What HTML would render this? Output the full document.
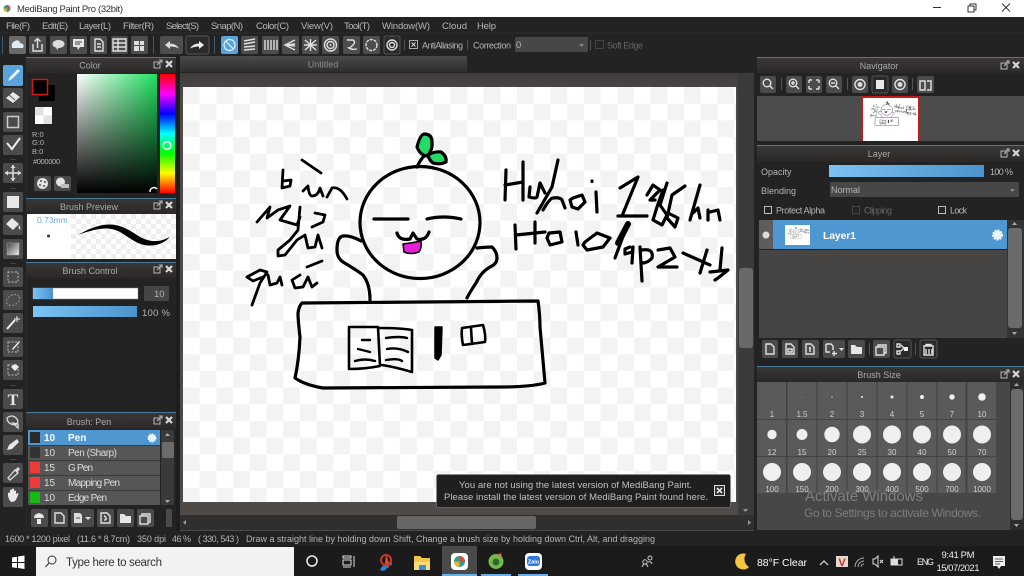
<!DOCTYPE html>
<html><head><meta charset="utf-8"><title>MediBang Paint Pro</title>
<style>
html,body{margin:0;padding:0;background:#222;width:1024px;height:576px;overflow:hidden}
svg{display:block;font-family:"Liberation Sans",sans-serif;filter:blur(.35px)}
text{fill:#b5b5b5;font-size:9.5px}
.ti{fill:#a9a9a9;font-size:9px;text-anchor:middle}
.m{fill:#b8b8b8;font-size:9.5px}
.c{text-anchor:middle;fill:#d0d0d0;font-size:8px}
.art path,.art ellipse{fill:none;stroke:#000;stroke-width:3.2;stroke-linecap:round;stroke-linejoin:round}
.ic{fill:none;stroke:#e0e0e0;stroke-width:1.4}
.tb{fill:#fff;font-size:11px}
</style></head><body>
<svg width="1024" height="576" viewBox="0 0 1024 576" xmlns="http://www.w3.org/2000/svg">
<defs>
<pattern id="ck" x="183" y="87" width="33.4" height="33.4" patternUnits="userSpaceOnUse"><rect width="33.4" height="33.4" fill="#fff"/><rect width="16.7" height="16.7" fill="#f3f3f3"/><rect x="16.7" y="16.7" width="16.7" height="16.7" fill="#f3f3f3"/></pattern>
<pattern id="ck2" x="71" y="214" width="10" height="10" patternUnits="userSpaceOnUse"><rect width="10" height="10" fill="#fff"/><rect width="5" height="5" fill="#eeeeee"/><rect x="5" y="5" width="5" height="5" fill="#eeeeee"/></pattern>
<pattern id="ck3" x="35" y="107" width="17" height="17" patternUnits="userSpaceOnUse"><rect width="17" height="17" fill="#fff"/><rect width="8.5" height="8.5" fill="#e2e2e2"/><rect x="8.5" y="8.5" width="8.5" height="8.5" fill="#e2e2e2"/></pattern>
<linearGradient id="tg" x1="0" y1="0" x2="0" y2="1"><stop offset="0" stop-color="#3a3837"/><stop offset="1" stop-color="#2a2928"/></linearGradient>
<linearGradient id="tab" x1="0" y1="0" x2="0" y2="1"><stop offset="0" stop-color="#4a4a4a"/><stop offset="1" stop-color="#2e2e2e"/></linearGradient>
<linearGradient id="cv" x1="0" y1="0" x2="0" y2="1"><stop offset="0" stop-color="#3e3d3c"/><stop offset=".05" stop-color="#4d4a47"/><stop offset="1" stop-color="#4d4a47"/></linearGradient>
<linearGradient id="bl" x1="0" y1="0" x2="1" y2="0"><stop offset="0" stop-color="#7cc2f3"/><stop offset="1" stop-color="#4b93cc"/></linearGradient>
<linearGradient id="hue" x1="0" y1="0" x2="0" y2="1"><stop offset="0" stop-color="#f00"/><stop offset=".167" stop-color="#f0f"/><stop offset=".333" stop-color="#00f"/><stop offset=".5" stop-color="#0ff"/><stop offset=".667" stop-color="#0f0"/><stop offset=".833" stop-color="#ff0"/><stop offset="1" stop-color="#f00"/></linearGradient>
<linearGradient id="sv1" x1="0" y1="0" x2="1" y2="0"><stop offset="0" stop-color="#fff"/><stop offset="1" stop-color="#1fe060"/></linearGradient>
<linearGradient id="sv2" x1="0" y1="0" x2="0" y2="1"><stop offset="0" stop-color="#000" stop-opacity="0"/><stop offset="1" stop-color="#000"/></linearGradient>
<linearGradient id="gr" x1="0" y1="0" x2="1" y2="1"><stop offset="0" stop-color="#444"/><stop offset="1" stop-color="#eee"/></linearGradient>
<g id="hd"><rect x="0" y="-4" width="6" height="6" fill="none" stroke="#b5b5b5"/><path d="M3 -1L8 -6M5 -6h3v3" stroke="#b5b5b5" fill="none"/><path d="M12 -5L18 1M18 -5L12 1" stroke="#d8d8d8" stroke-width="2.2"/></g>
<g id="art" class="art">
<ellipse cx="420" cy="222.5" rx="60" ry="56"/>
<path d="M417 167Q420 160 425 155"/>
<path d="M417 147Q420 135 424 134Q432 134 432 142Q433 150 427 156Q420 155 417 147Z" style="fill:#22dc66"/>
<path d="M428 155Q435 151 441 152Q447 156 446 162Q440 165 433 163Q429 160 428 155Z" style="fill:#22dc66"/>
<path d="M374 219H408M427 219Q443 215 461 219"/>
<path d="M397 233Q399 241 410 239L413 233L417 239Q426 241 429 232"/>
<path d="M403 244Q412 243 421 241Q422 248 419 252Q411 255 404 252Z" style="fill:#e81ed8;stroke:#000;stroke-width:1.5"/>
<path d="M361 241Q350 235 343 236Q337 237 337 250Q337 258 343 262Q358 271 363 275Q370 284 370 300"/>
<path d="M477 248Q487 247 492 247Q497 252 497 258Q497 264 490 267Q481 272 476 283Q470 292 467 298"/>
<path d="M302 303L538 301Q540 315 540 327L545 383Q530 387 500 387L323 388Q305 385 295 378Q299 360 300 337Q298 320 298 313Q299 306 302 303Z"/>
<path d="M349 327L378 327L380 366Q365 369 349 369Q349 345 349 327Z" style="stroke-width:2.6"/>
<path d="M380 328Q400 328 412 330V372Q395 367 382 365" style="stroke-width:2.6"/>
<path d="M362 340H370M358 349L370 352M355 361Q365 358 375 361M386 338Q400 336 407 338M387 349Q398 347 408 352M386 360Q398 358 402 361" style="stroke-width:2.4"/>
<path d="M435 327H442L441 355L438 360L435 358Z" style="fill:#000;stroke-width:1.5"/>
<path d="M462 328L483 325Q486 335 485 342L463 345Q461 335 462 328ZM471 328L472 344" style="stroke-width:2.6"/>
<path d="M283 170L282 188L290 186L291 180L283 181M302 160L321 173M303 191L308 186Q309 196 312 196Q318 196 320 188L323 196M327 197L332 188Q340 186 347 199" style="stroke-width:2.8"/>
<path d="M257 222L270 207L267 218L278 210L290 206L280 220L297 225L300 217M300 207L298 230L290 240L278 250L278 256L285 255L297 240L305 235L308 248L315 247L318 235L322 248M315 213L325 215L323 222L312 227" style="stroke-width:2.8"/>
<path d="M247 277L260 270L267 272L260 283L252 305M247 277L253 281L263 277M268 275L270 285L277 283L280 277L282 285M300 275L292 280L295 288L303 287L308 277L312 287L317 283M307 267L322 261" style="stroke-width:2.8"/>
<path d="M506 170L505 200M505 185L523 182M523 162V200M530 187L529 197Q536 199 537 197L540 183L545 193M558 160L552 187L537 213M543 210Q550 198 553 198Q560 197 562 200L565 208M573 198L582 195L585 202L578 209L572 207L570 200ZM596 192L597 212M592 181V181.500M620 188L638 177L622 216M618 216H647M647 195L653 185L660 190L650 200L655 200M663 190L657 207L653 220L662 225L667 215L660 205L667 183M685 186L672 195L667 218L675 227L678 218L668 213M700 185L690 220M693 213L698 208L700 218M708 210V220M710 212L718 210L720 220"/>
<path d="M515 225L516 249M516 235L545 232M535 222V243M549 233L560 232L562 242L550 245L547 238ZM576 232L578 245M585 242L597 233L610 238L603 247L587 250L583 245ZM628 223L615 258"/>
<path d="M628 224L618 243" style="stroke-width:6"/>
<path d="M630 247L625 249L625 254L632 252L633 247L632 263M640 247L642 281M642 250Q654 248 652 258Q648 263 642 263M658 250L670 248L675 257L658 267L677 267M683 253L710 265M707 250L700 273M710 272L728 270L718 278L715 280M722 248L720 270"/>
</g>
</defs>

<!-- title bar -->
<rect width="1024" height="17" fill="#fff"/>
<circle cx="7" cy="8.5" r="3.5" fill="#2b9f8a"/><path d="M7 5a3.5 3.5 0 0 1 3.5 3.5H7z" fill="#e04c3c"/><path d="M3.5 8.5A3.5 3.5 0 0 0 7 12V8.5z" fill="#e0b030"/>
<text x="17" y="12" style="fill:#333;font-size:9.5px" textLength="106">MediBang Paint Pro (32bit)</text>
<path d="M933 7.5H941" stroke="#333"/><path d="M968 6h6v6h-6zM970 6V4h6v6h-2" fill="none" stroke="#333"/><path d="M1002 3.5l8 8M1010 3.5l-8 8" stroke="#333"/>

<!-- base -->
<rect y="17" width="1024" height="514" fill="#232323"/>
<text class="m" x="6" y="29" textLength="24">File(F)</text><text class="m" x="42" y="29" textLength="26">Edit(E)</text><text class="m" x="79" y="29" textLength="32">Layer(L)</text><text class="m" x="123" y="29" textLength="31">Filter(R)</text><text class="m" x="166" y="29" textLength="33">Select(S)</text><text class="m" x="211" y="29" textLength="32">Snap(N)</text><text class="m" x="256" y="29" textLength="33">Color(C)</text><text class="m" x="301" y="29" textLength="32">View(V)</text><text class="m" x="344" y="29" textLength="26">Tool(T)</text><text class="m" x="382" y="29" textLength="48">Window(W)</text><text class="m" x="442" y="29" textLength="25">Cloud</text><text class="m" x="477" y="29" textLength="19">Help</text>
<path d="M0 33H1024" stroke="#2c2c2c"/>

<!-- toolbar -->
<g fill="#4d4d4d">
<rect x="9" y="36" width="17" height="18" rx="2" fill="#6a6a6a"/><rect x="29" y="36" width="17" height="18" rx="2"/><rect x="50" y="36" width="17" height="18" rx="2"/><rect x="70" y="36" width="17" height="18" rx="2"/><rect x="90" y="36" width="17" height="18" rx="2"/><rect x="111" y="36" width="17" height="18" rx="2"/><rect x="131" y="36" width="17" height="18" rx="2"/>
<rect x="160" y="36" width="23" height="18" rx="2"/><rect x="186" y="36" width="23" height="18" rx="2" fill="#2a2a2a" stroke="#555"/>
<rect x="221" y="36" width="17" height="18" rx="2" fill="#5aa4dc"/>
<rect x="241" y="36" width="17" height="18" rx="2"/><rect x="262" y="36" width="17" height="18" rx="2"/><rect x="282" y="36" width="17" height="18" rx="2"/><rect x="302" y="36" width="17" height="18" rx="2"/><rect x="322" y="36" width="17" height="18" rx="2"/><rect x="343" y="36" width="17" height="18" rx="2"/><rect x="363" y="36" width="17" height="18" rx="2"/><rect x="384" y="36" width="16" height="18" rx="2" fill="#2a2a2a" stroke="#555"/>
</g>
<path d="M2.5 36V54M153.5 36V54M214.5 36V54" stroke="#3d5c75"/>
<path d="M12 48h11q2-4-3-5q-1-4-5-2q-4 1-3 7z" fill="#dcecf8"/>
<path d="M33 44v7h9v-7M37.500 48V39M34.500 41.500l3-3l3 3" class="ic"/>
<ellipse cx="58.500" cy="44" rx="6" ry="4" fill="#ddd"/><path d="M56 47l1 3l2-3z" fill="#ddd"/>
<path d="M73 39h11v8h-4l-2 3l-1-3h-4z" fill="#e6e6e6"/><path d="M75 42h7M75 44h5" stroke="#444"/>
<path d="M95 39h5l3 3v9h-8zM97 44h4M97 47h4" class="ic"/>
<path d="M113 39h13v12h-13zM113 43h13M113 47h13M118 39v12" class="ic" stroke-width="1"/>
<path d="M134 41h5v4h-5zM140 41h4v4h-4zM134 46h5v5h-5zM140 46h4v5h-4z" fill="#ddd"/>
<path d="M165 45l5-4v2.500q6 0 9 5q-4-2-9-2v2.500z" fill="#ddd"/><path d="M204 45l-5-4v2.500q-6 0-9 5q4-2 9-2v2.500z" fill="#eee"/>
<circle cx="229.500" cy="45" r="5.500" fill="none" stroke="#dff0ff" stroke-width="1.200"/><path d="M225.500 41l8 8" stroke="#dff0ff" stroke-width="1.200"/>
<path d="M244 41l11-2M244 44l11-2M244 47l11-1M244 50l11-1" class="ic" stroke-width="1.300"/>
<path d="M265 40v10M268 40v10M271 40v10M274 40v10M277 40v10" class="ic" stroke-width="1.300"/>
<path d="M295 40l-10 5l10 5M295 44l-8 1l8 1" class="ic" stroke-width="1.300"/>
<path d="M305 40l11 10M316 40l-11 10M310.500 39v12M304 45h13" class="ic" stroke-width="1"/>
<circle cx="330.500" cy="45" r="6" class="ic" stroke-width="1"/><circle cx="330.500" cy="45" r="3.500" class="ic" stroke-width="1"/><circle cx="330.500" cy="45" r="1" fill="#ddd"/>
<path d="M347 40h6q3 2 0 5t-4 3q3 2 8 1" class="ic"/>
<circle cx="371.500" cy="45" r="5.500" class="ic" stroke-width="1.800" stroke-dasharray="3 1"/>
<circle cx="392" cy="45" r="5" class="ic" stroke-width="1.200"/><circle cx="392" cy="45" r="2.500" class="ic" stroke-width="1"/>
<path d="M404.500 40V50M467.500 40V50M590.500 40V50" stroke="#555"/>
<rect x="409.500" y="40.500" width="8" height="8" fill="none" stroke="#aaa"/><path d="M411.500 42.500l4 4M415.500 42.500l-4 4" stroke="#ddd"/>
<text x="422" y="48.500" textLength="41" style="font-size:9px">AntiAliasing</text>
<text x="473" y="48.500" textLength="38" style="font-size:9px">Correction</text>
<rect x="515" y="37" width="73" height="15" rx="1" fill="#474747"/><text x="516" y="48">0</text><path d="M579 44h5l-2.500 3z" fill="#888"/>
<rect x="595.500" y="40.500" width="8" height="8" fill="none" stroke="#444"/><text x="607" y="48.500" textLength="36" style="font-size:9px;fill:#666">Soft Edge</text>

<!-- left tools -->
<g fill="#4b4b4b">
<rect x="3" y="65" width="20" height="21" rx="2" fill="#5aa4dc"/>
<rect x="3" y="88" width="20" height="20" rx="2"/><rect x="3" y="112" width="20" height="20" rx="2"/><rect x="3" y="135" width="20" height="20" rx="2"/>
<rect x="3" y="163" width="20" height="20" rx="2"/><rect x="3" y="192" width="20" height="20" rx="2"/><rect x="3" y="215" width="20" height="20" rx="2"/><rect x="3" y="239" width="20" height="20" rx="2"/>
<rect x="3" y="267" width="20" height="20" rx="2"/><rect x="3" y="290" width="20" height="20" rx="2"/><rect x="3" y="313" width="20" height="20" rx="2"/><rect x="3" y="337" width="20" height="20" rx="2"/><rect x="3" y="360" width="20" height="20" rx="2"/>
<rect x="3" y="389" width="20" height="20" rx="2"/><rect x="3" y="412" width="20" height="20" rx="2"/><rect x="3" y="435" width="20" height="20" rx="2"/>
<rect x="3" y="463" width="20" height="20" rx="2"/><rect x="3" y="487" width="20" height="20" rx="2"/>
</g>
<path d="M8 81l2-4l8-8l2 2l-8 8z" fill="#eef6ff"/>
<path d="M6 98l7-6l7 5l-7 6z" fill="#e8e8e8"/><path d="M9 95l6 5" stroke="#555"/>
<rect x="7.500" y="116.500" width="11" height="11" fill="none" stroke="#ccc" stroke-width="1.500"/>
<path d="M7 143l5 6l8-11" fill="none" stroke="#eee" stroke-width="2"/>
<path d="M13 165v16M5 173h16" stroke="#ddd" stroke-width="1.500"/><path d="M10.500 168l2.500-3l2.500 3zM10.500 178l2.500 3l2.500-3zM8 170.500l-3 2.500l3 2.500zM18 170.500l3 2.500l-3 2.500z" fill="#ddd"/>
<rect x="7" y="196" width="12" height="12" fill="#e8e8e8"/>
<path d="M6 224l6-6l7 6l-6 6zM19 225q2 3 1 5q-2-2-1-5z" fill="#e8e8e8"/>
<rect x="7" y="243" width="12" height="12" fill="url(#gr)" stroke="#aaa" stroke-width=".5"/>
<rect x="8" y="272" width="10" height="10" fill="none" stroke="#bbb" stroke-dasharray="2 1.500"/>
<ellipse cx="13" cy="300" rx="7" ry="5" fill="none" stroke="#999" stroke-dasharray="2 1.500" transform="rotate(-25 13 300)"/>
<path d="M7 329l8-9" stroke="#eee" stroke-width="2"/><path d="M17 316v6M14 319h6" stroke="#eee"/>
<rect x="8" y="342" width="10" height="10" fill="none" stroke="#bbb" stroke-dasharray="2 1.500"/><path d="M12 349l7-8l1 1l-7 8z" fill="#eee"/>
<rect x="8" y="365" width="10" height="10" fill="none" stroke="#bbb" stroke-dasharray="2 1.500"/><path d="M11 367l4-3l4 3l-4 4z" fill="#eee"/>
<text x="13" y="405" style="font:bold 16px 'Liberation Serif',serif;fill:#e8e8e8;text-anchor:middle">T</text>
<path d="M7 418q5-4 9 0t-1 7l-4-1q-4-2-4-6zM13 423l5 5v-4z" fill="none" stroke="#ddd" stroke-width="1.300"/>
<path d="M7 450l2-5l8-6l2 3l-7 7z" fill="#e8e8e8"/>
<path d="M8 478l7-8l3 3l-8 7z" fill="none" stroke="#ddd" stroke-width="1.300"/><path d="M15 470l3-3l2 2l-3 4z" fill="#ddd"/>
<path d="M8 497v-4q1-1 2 0v-3q1-1 2 0v-1q1-1 2 0v2q1-1 2 0v3l2-1q1 1 0 2l-2 5q-2 2-5 2q-2-2-3-6z" fill="#e8e8e8"/>
<path d="M10 159.500h6M10 188.500h6M10 263.500h6M10 385.500h6M10 459.500h6" stroke="#444"/>
<rect x="26" y="56" width="1" height="475" fill="#2a2a2a"/>

<!-- color panel -->
<rect x="26" y="58" width="150" height="15" fill="url(#tg)"/><rect x="26" y="57" width="150" height="1" fill="#4a7896"/>
<text class="ti" x="90" y="68.500">Color</text><use href="#hd" x="154" y="66"/>
<rect x="39" y="85" width="16" height="16" fill="#000"/>
<rect x="32.500" y="79.500" width="15" height="15" fill="#000" stroke="#d01818" stroke-width="1.500"/>
<rect x="35" y="107" width="17" height="17" fill="url(#ck3)"/>
<text x="32" y="137" style="font-size:7.500px">R:0</text><text x="32" y="145" style="font-size:7.500px">G:0</text><text x="32" y="154" style="font-size:7.500px">B:0</text><text x="33" y="164" style="font-size:7.500px" textLength="27">#000000</text>
<rect x="34" y="176" width="17" height="15" rx="2" fill="#4a4a4a"/><rect x="54" y="176" width="17" height="15" rx="2" fill="#4a4a4a"/>
<circle cx="42.500" cy="183.500" r="5.500" fill="#e2e2e2"/><circle cx="41" cy="181" r="1" fill="#555"/><circle cx="45" cy="182" r="1" fill="#555"/><circle cx="40" cy="185" r="1" fill="#555"/><circle cx="44" cy="186" r="1" fill="#555"/>
<circle cx="60.500" cy="182" r="4.500" fill="#e2e2e2"/><rect x="61" y="184" width="8" height="4" fill="#bbb"/>
<rect x="77" y="74" width="80" height="119" fill="url(#sv1)"/><rect x="77" y="74" width="80" height="119" fill="url(#sv2)"/>
<path d="M150 192a4 4 0 0 1 7-3" fill="none" stroke="#eee" stroke-width="1.500"/>
<rect x="160" y="74" width="15" height="119" fill="url(#hue)"/>
<circle cx="167" cy="145.500" r="3.800" fill="none" stroke="#eef" stroke-width="1.500"/>

<!-- brush preview -->
<rect x="26" y="199" width="150" height="15" fill="url(#tg)"/><rect x="26" y="198" width="150" height="1" fill="#4a7896"/>
<text class="ti" x="89" y="210">Brush Preview</text><use href="#hd" x="154" y="207"/>
<rect x="27" y="214" width="44" height="45" fill="#fff"/><rect x="71" y="214" width="105" height="45" fill="url(#ck2)"/>
<text x="37" y="223" style="fill:#6fa9d6;font-size:8.500px">0.73mm</text><circle cx="48.500" cy="236" r="1.500" fill="#333"/>
<path d="M78 235C88 229 98 225 108 224.500C122 224 132 232 141 237.500C150 242 160 243 170 236.500C165 243 157 246 148 245.500C138 245 130 238 120 232C110 227 100 227 78 235Z" fill="#000"/>

<!-- brush control -->
<rect x="26" y="263" width="150" height="15" fill="url(#tg)"/><rect x="26" y="262" width="150" height="1" fill="#4a7896"/>
<text class="ti" x="90" y="274">Brush Control</text><use href="#hd" x="154" y="271"/>
<rect x="33" y="288" width="105" height="11" fill="#fff" stroke="#888" stroke-width=".5"/><rect x="33" y="288" width="20" height="11" fill="url(#bl)"/>
<rect x="144" y="286" width="25" height="15" rx="1" fill="#454545"/><text x="154" y="297">10</text>
<rect x="33" y="306" width="104" height="11" fill="url(#bl)"/><text x="142" y="316" textLength="28">100 %</text>

<!-- brush list -->
<rect x="26" y="413" width="150" height="16" fill="url(#tg)"/><rect x="26" y="412" width="150" height="1" fill="#4a7896"/>
<text class="ti" x="89" y="425">Brush: Pen</text><use href="#hd" x="154" y="422"/>
<rect x="28" y="430" width="132" height="75" fill="#565656"/>
<rect x="28" y="430" width="132" height="15" fill="#4f97d0"/>
<path d="M28 445.500H160M28 460.500H160M28 475.500H160M28 490.500H160" stroke="#3c3c3c"/>
<rect x="30" y="432" width="10" height="11" fill="#2b2b2b"/><rect x="30" y="447" width="10" height="11" fill="#333"/><rect x="30" y="462" width="10" height="11" fill="#ef3a3a"/><rect x="30" y="477" width="10" height="11" fill="#ef3a3a"/><rect x="30" y="492" width="10" height="11" fill="#15b815"/>
<text x="44" y="441" style="fill:#fff;font-size:10px;font-weight:bold">10</text><text x="68" y="441" style="fill:#fff;font-size:10px;font-weight:bold">Pen</text>
<text x="44" y="456" style="fill:#ddd;font-size:10px">10</text><text x="68" y="456" style="fill:#ddd;font-size:10px" textLength="49">Pen (Sharp)</text>
<text x="44" y="471" style="fill:#ddd;font-size:10px">15</text><text x="68" y="471" style="fill:#ddd;font-size:10px" textLength="25">G Pen</text>
<text x="44" y="486" style="fill:#ddd;font-size:10px">15</text><text x="68" y="486" style="fill:#ddd;font-size:10px" textLength="52">Mapping Pen</text>
<text x="44" y="501" style="fill:#ddd;font-size:10px">10</text><text x="68" y="501" style="fill:#ddd;font-size:10px" textLength="39">Edge Pen</text>
<circle cx="152" cy="438" r="3.800" fill="#e8f3fb" stroke="#e8f3fb" stroke-dasharray="1.500 1" stroke-width="1.500"/>
<rect x="161" y="430" width="13" height="75" fill="#3a3a3a"/><rect x="162" y="442" width="12" height="16" rx="2" fill="#6b6b6b"/><path d="M165 436l2.500-3l2.500 3zM165 500l2.500 3l2.500-3z" fill="#aaa"/>
<g fill="#4b4b4b"><rect x="31" y="509" width="17" height="18" rx="2"/><rect x="51" y="509" width="17" height="18" rx="2"/><rect x="71" y="509" width="23" height="18" rx="2"/><rect x="97" y="509" width="17" height="18" rx="2"/><rect x="117" y="509" width="17" height="18" rx="2"/><rect x="137" y="509" width="17" height="18" rx="2"/><rect x="166" y="509" width="6" height="18" rx="1"/></g>
<path d="M34 518q0-4 5-5q5 1 5 5zM37 519h4v5h-4z" fill="#e8e8e8"/>
<path d="M55 513h6l3 3v7h-9z" class="ic" stroke-width="1"/>
<path d="M74 513h6l2 2v8h-8z" fill="#ddd"/><path d="M76 518h4" stroke="#555"/><path d="M85 517h6l-3 3z" fill="#ddd"/>
<path d="M101 513h6l3 3v7h-9zM104 520q3 0 2-2t-2-2" class="ic" stroke-width="1"/>
<path d="M120 514h4l2 2h5v7h-11z" fill="#e6e6e6"/>
<path d="M140 516h8v8h-8zM142 516v-2h8v8h-2" class="ic" stroke-width="1"/>

<!-- canvas area -->
<rect x="176" y="56" width="4" height="475" fill="#1e1e1e"/>
<rect x="180" y="56" width="287" height="16" rx="1" fill="url(#tab)"/>
<text class="ti" x="323" y="67.500" style="fill:#8f8f8f">Untitled</text>
<rect x="180" y="73" width="574" height="458" fill="url(#cv)"/>
<rect x="183" y="87" width="553" height="415" fill="url(#ck)"/>
<use href="#art"/>

<rect x="738" y="74" width="16" height="441" fill="#3a3a3a"/><rect x="739" y="268" width="14" height="80" rx="3" fill="#696969"/>
<path d="M743 509h5l-2.500 3z" fill="#999"/>
<rect x="180" y="515" width="574" height="15" fill="#2f2f2f"/><rect x="397" y="516" width="139" height="13" rx="2" fill="#666"/><path d="M186 520v5l-3-2.500zM748 520v5l3-2.500z" fill="#999"/>

<!-- notification -->
<rect x="436.500" y="474.500" width="294" height="33" rx="2" fill="#1f1f1f" stroke="#8a8a8a" stroke-width=".6"/>
<text x="459" y="488" textLength="233" style="fill:#c0c0c0;font-size:9.500px">You are not using the latest version of MediBang Paint.</text>
<text x="444" y="500" textLength="264" style="fill:#c0c0c0;font-size:9.500px">Please install the latest version of MediBang Paint found here.</text>
<rect x="714.500" y="485.500" width="10" height="10" fill="#333" stroke="#ddd"/><path d="M717 488l5 5M722 488l-5 5" stroke="#fff" stroke-width="1.400"/>

<!-- navigator -->
<rect x="757" y="58" width="267" height="15" fill="url(#tg)"/><rect x="757" y="57" width="267" height="1" fill="#4a7896"/>
<text class="ti" x="879" y="69">Navigator</text><use href="#hd" x="1001" y="67"/>
<g fill="#4b4b4b"><rect x="760" y="76" width="16" height="17" rx="2"/><rect x="786" y="76" width="16" height="17" rx="2"/><rect x="806" y="76" width="16" height="17" rx="2"/><rect x="826" y="76" width="16" height="17" rx="2"/><rect x="852" y="76" width="16" height="17" rx="2"/><rect x="872" y="76" width="16" height="17" rx="2" fill="#2a2a2a" stroke="#555"/><rect x="892" y="76" width="16" height="17" rx="2"/><rect x="917" y="76" width="17" height="17" rx="2"/></g>
<circle cx="767" cy="83" r="3.800" class="ic" stroke-width="1.200"/><path d="M770 86l3 3" class="ic"/>
<circle cx="793" cy="83" r="3.800" class="ic" stroke-width="1.200"/><path d="M796 86l3 3M791 83h4M793 81v4" class="ic" stroke-width="1"/>
<path d="M809 80h3M809 80v3M819 80h-3M819 80v3M809 89h3M809 89v-3M819 89h-3M819 89v-3" class="ic"/>
<circle cx="833" cy="83" r="3.800" class="ic" stroke-width="1.200"/><path d="M836 86l3 3M831 83h4" class="ic" stroke-width="1"/>
<circle cx="860" cy="84.500" r="5" class="ic"/><circle cx="860" cy="84.500" r="2.500" fill="#ddd"/>
<rect x="876" y="80" width="8" height="9" fill="#e8e8e8"/>
<circle cx="900" cy="84.500" r="5" class="ic"/><circle cx="900" cy="84.500" r="2.500" fill="#ddd"/>
<path d="M920 81h5v9h-5zM927 81h4v9h-4" class="ic" stroke-width="1"/>
<path d="M781.500 78V90M847.500 78V90M912.500 78V90" stroke="#555"/>
<rect x="757" y="96" width="267" height="45" fill="#4c4c4c"/>
<rect x="861" y="96" width="59" height="45" fill="#c01c1c"/><rect x="863" y="98" width="55" height="43" fill="#fff"/>
<use href="#art" transform="translate(846.400 88.600) scale(.096)"/>

<!-- layer panel -->
<rect x="757" y="146" width="267" height="16" fill="url(#tg)"/><rect x="757" y="145" width="267" height="1" fill="#4a7896"/>
<text class="ti" x="879" y="157">Layer</text><use href="#hd" x="1001" y="155"/>
<text x="761" y="175" style="font-size:9px">Opacity</text><rect x="829" y="165" width="155" height="12" fill="url(#bl)"/><text x="990" y="175" textLength="23" style="font-size:9px">100 %</text>
<text x="761" y="194" style="font-size:9px">Blending</text><rect x="830" y="182" width="189" height="15" rx="1" fill="#474747"/><text x="831" y="193" style="font-size:9px">Normal</text><path d="M1010 189h5l-2.500 3z" fill="#888"/>
<rect x="764.500" y="206.500" width="7" height="7" fill="none" stroke="#bbb"/><text x="776" y="213.500" style="font-size:9px" textLength="49">Protect Alpha</text>
<rect x="852.500" y="206.500" width="7" height="7" fill="none" stroke="#444"/><text x="864" y="213.500" style="font-size:9px;fill:#666" textLength="28">Clipping</text>
<rect x="938.500" y="206.500" width="7" height="7" fill="none" stroke="#bbb"/><text x="950" y="213.500" style="font-size:9px" textLength="17">Lock</text>
<rect x="759" y="220" width="248" height="118" fill="#464544"/>
<rect x="759" y="220" width="14" height="29" fill="#5d5d5d"/><circle cx="766" cy="235" r="3.500" fill="#ddd"/>
<rect x="773" y="220" width="234" height="29" fill="#4f97d0"/><path d="M759 249.500H1007" stroke="#222"/>
<rect x="785" y="225" width="25" height="20" fill="#fff"/><use href="#art" transform="translate(776.800 221) scale(.045)"/>
<text x="823" y="239" style="fill:#fff;font-size:10.500px;font-weight:bold" textLength="33">Layer1</text>
<circle cx="997.500" cy="235" r="4.500" fill="#e8f3fb" stroke="#e8f3fb" stroke-dasharray="2 1" stroke-width="2"/>
<rect x="1007" y="220" width="17" height="118" fill="#333"/><rect x="1008" y="228" width="14" height="100" rx="3" fill="#6b6b6b"/><path d="M1012 225l2.500-3l2.500 3zM1012 332l2.500 3l2.500-3z" fill="#aaa"/>
<g fill="#4b4b4b"><rect x="762" y="340" width="16" height="18" rx="2"/><rect x="782" y="340" width="16" height="18" rx="2"/><rect x="802" y="340" width="17" height="18" rx="2"/><rect x="823" y="340" width="22" height="18" rx="2"/><rect x="848" y="340" width="17" height="18" rx="2"/><rect x="873" y="340" width="17" height="18" rx="2"/><rect x="894" y="340" width="17" height="18" rx="2" fill="#2a2a2a" stroke="#555"/><rect x="920" y="340" width="17" height="18" rx="2" fill="#2a2a2a" stroke="#555"/></g>
<path d="M766 344h5l3 3v7h-8z" class="ic" stroke-width="1"/><path d="M786 344h5l3 3v7h-8zM788 349h4v3h-4z" class="ic" stroke-width="1"/><path d="M806 344h5l3 3v7h-8zM810 347v5M809 348h2" class="ic" stroke-width="1"/><path d="M826 344h5l2 2v4M826 344v8h4M834 351v5M832 353.500h5" class="ic" stroke-width="1"/><path d="M839 348h5l-2.500 3z" fill="#ddd"/>
<path d="M851 345h4l2 2h5v7h-11z" fill="#e6e6e6"/><path d="M876 347h8v8h-8zM878 347v-2h8v8h-2" class="ic" stroke-width="1"/>
<path d="M897 344h3v3h-3zM897 351h3v3h-3zM901 345l3 3l-3 3" class="ic" stroke-width="1"/><rect x="904" y="347" width="4" height="4" fill="#eee"/>
<path d="M923 346h11M924 347v8h9v-8M926 349v5M929 349v5M932 349v5M926 346v-1.500h5v1.500" class="ic" stroke-width="1"/>
<path d="M869.500 343V355M915.500 343V355" stroke="#555"/>

<!-- brush size -->
<rect x="757" y="367" width="267" height="15" fill="url(#tg)"/><rect x="757" y="366" width="267" height="1" fill="#4a7896"/>
<text class="ti" x="879" y="378">Brush Size</text><use href="#hd" x="1001" y="376"/>
<rect x="757" y="382" width="253" height="148" fill="#484746"/>
<rect x="757" y="382" width="239" height="111" fill="#434343"/>
<g fill="#5a5a5a">
<rect x="757" y="382" width="29" height="37"/><rect x="787.500" y="382" width="29" height="37"/><rect x="817.500" y="382" width="29" height="37"/><rect x="847.500" y="382" width="29" height="37"/><rect x="877.500" y="382" width="29" height="37"/><rect x="907.500" y="382" width="29" height="37"/><rect x="937.500" y="382" width="28" height="37"/><rect x="967.500" y="382" width="28.500" height="37"/>
<rect x="757" y="420" width="29" height="36"/><rect x="787.500" y="420" width="29" height="36"/><rect x="817.500" y="420" width="29" height="36"/><rect x="847.500" y="420" width="29" height="36"/><rect x="877.500" y="420" width="29" height="36"/><rect x="907.500" y="420" width="29" height="36"/><rect x="937.500" y="420" width="28" height="36"/><rect x="967.500" y="420" width="28.500" height="36"/>
<rect x="757" y="457" width="29" height="36"/><rect x="787.500" y="457" width="29" height="36"/><rect x="817.500" y="457" width="29" height="36"/><rect x="847.500" y="457" width="29" height="36"/><rect x="877.500" y="457" width="29" height="36"/><rect x="907.500" y="457" width="29" height="36"/><rect x="937.500" y="457" width="28" height="36"/><rect x="967.500" y="457" width="28.500" height="36"/>
</g>
<g fill="#efefef">
<circle cx="802" cy="397" r=".5" fill="#999"/><circle cx="832" cy="397" r=".7" fill="#ccc"/><circle cx="862" cy="397" r="1"/><circle cx="892" cy="397" r="1.500"/><circle cx="922" cy="397" r="2"/><circle cx="952" cy="397" r="2.700"/><circle cx="982" cy="397" r="3.800"/>
<circle cx="772" cy="434.500" r="4.700"/><circle cx="802" cy="434.500" r="5.500"/><circle cx="832" cy="434.500" r="7.700"/><circle cx="862" cy="434.500" r="9"/><circle cx="892" cy="434.500" r="9"/><circle cx="922" cy="434.500" r="9"/><circle cx="952" cy="434.500" r="9"/><circle cx="982" cy="434.500" r="9"/>
<circle cx="772" cy="472" r="9"/><circle cx="802" cy="472" r="9"/><circle cx="832" cy="472" r="9"/><circle cx="862" cy="472" r="9"/><circle cx="892" cy="472" r="9"/><circle cx="922" cy="472" r="9"/><circle cx="952" cy="472" r="9"/><circle cx="982" cy="472" r="9"/>
</g>
<text class="c" x="772" y="417">1</text><text class="c" x="802" y="417">1.5</text><text class="c" x="832" y="417">2</text><text class="c" x="862" y="417">3</text><text class="c" x="892" y="417">4</text><text class="c" x="922" y="417">5</text><text class="c" x="952" y="417">7</text><text class="c" x="982" y="417">10</text>
<text class="c" x="772" y="455">12</text><text class="c" x="802" y="455">15</text><text class="c" x="832" y="455">20</text><text class="c" x="862" y="455">25</text><text class="c" x="892" y="455">30</text><text class="c" x="922" y="455">40</text><text class="c" x="952" y="455">50</text><text class="c" x="982" y="455">70</text>
<text class="c" x="772" y="492">100</text><text class="c" x="802" y="492">150</text><text class="c" x="832" y="492">200</text><text class="c" x="862" y="492">300</text><text class="c" x="892" y="492">400</text><text class="c" x="922" y="492">500</text><text class="c" x="952" y="492">700</text><text class="c" x="982" y="492">1000</text>
<rect x="1010" y="382" width="14" height="148" fill="#2c2c2c"/><rect x="1011" y="389" width="12" height="131" rx="3" fill="#6b6b6b"/><path d="M1014 386l2.500-3l2.500 3zM1014 524l2.500 3l2.500-3z" fill="#aaa"/>
<text x="805" y="501" textLength="118" style="font-size:15px;fill:#808080">Activate Windows</text>
<text x="804" y="517" textLength="177" style="font-size:12px;fill:#7c7c7c">Go to Settings to activate Windows.</text>

<!-- status -->
<rect y="531" width="1024" height="15" fill="#222"/>
<text x="5" y="542" textLength="65" style="font-size:9px">1600 * 1200 pixel</text><text x="77" y="542" textLength="53" style="font-size:9px">(11.6 * 8.7cm)</text><text x="137" y="542" textLength="29" style="font-size:9px">350 dpi</text><text x="172" y="542" textLength="19" style="font-size:9px">46 %</text><text x="198" y="542" textLength="41" style="font-size:9px">( 330, 543 )</text>
<text x="246" y="542" textLength="409" style="font-size:9px">Draw a straight line by holding down Shift, Change a brush size by holding down Ctrl, Alt, and dragging</text>

<!-- taskbar -->
<rect y="546" width="1024" height="30" fill="#1b1b1b"/>
<path d="M12 557.500l5-.8V562h-5zM18 556.500l6.500-1V562H18zM12 563h5v5l-5-.8zM18 563h6.500v6l-6.500-1z" fill="#fff"/>
<rect x="36" y="547" width="258" height="29" fill="#f2f2f2"/>
<circle cx="52" cy="560" r="4" fill="none" stroke="#333"/><path d="M49 563l-3.500 4" stroke="#333"/>
<text x="66" y="566" textLength="96" style="fill:#333;font-size:11.500px">Type here to search</text>
<circle cx="312" cy="561" r="5" fill="none" stroke="#eee" stroke-width="1.500"/>
<path d="M343 556h8v2h-8zM343 560h8v5h-8zM343 567h8M354 556v11" fill="none" stroke="#ddd"/>
<path d="M386 554l3 9q1 3-1 5q-3-2-3-5z" fill="#e14b2a"/><path d="M380 570q2-5 6-6l2 3q-3 4-5 4zM391 561q2 2 0 5l-2-2z" fill="#2a7fd0"/><circle cx="386" cy="560" r="5" fill="none" stroke="#c7382a" stroke-width="2"/>
<path d="M414 556h6l2 2h8v12h-16z" fill="#f3c54a"/><rect x="414" y="562" width="16" height="8" fill="#fbdc78"/><rect x="419" y="565" width="7" height="5" fill="#3a8fd0"/>
<rect x="442" y="546" width="35" height="30" fill="#4a4a4a"/>
<rect x="451" y="553" width="17" height="17" rx="4" fill="#fff"/><circle cx="459.500" cy="561.500" r="5.500" fill="#2b9f8a"/><path d="M459.500 556a5.500 5.500 0 0 1 5.500 5.500H459.500z" fill="#e04c3c"/><path d="M454 561.500a5.500 5.500 0 0 0 5.500 5.500V561.500z" fill="#f0b030"/>
<circle cx="496" cy="561.500" r="7.500" fill="#77b84a"/><circle cx="496" cy="562" r="3.500" fill="#2e6a2e"/><path d="M497 555l4-2l1 4z" fill="#e86060"/>
<rect x="525" y="553" width="17" height="17" rx="4" fill="#fff"/><rect x="527" y="556" width="13" height="10" rx="3" fill="#2f78e0"/><text x="533.500" y="563.500" style="fill:#fff;font-size:5.500px;text-anchor:middle;font-weight:bold">Zalo</text>
<rect x="442" y="574" width="35" height="2" fill="#6ab0e6"/><rect x="481" y="574" width="30" height="2" fill="#6ab0e6"/><rect x="518" y="574" width="30" height="2" fill="#6ab0e6"/>
<circle cx="645" cy="562" r="2.200" fill="none" stroke="#ccc"/><circle cx="650" cy="558" r="2" fill="none" stroke="#ccc"/><path d="M642 567q1-3 3-3t3 3M648 562q3-1 4 2" fill="none" stroke="#ccc"/>
<path d="M746 554a8 8 0 1 0 3 13a9 9 0 0 1-3-13z" fill="#f5c542"/>
<text x="757" y="566" textLength="50" class="tb" style="font-size:10.500px">88°F  Clear</text>
<path d="M820 565l4-4l4 4" fill="none" stroke="#ddd" stroke-width="1.200"/>
<rect x="836" y="556" width="12" height="11" fill="#e8d8d0"/><text x="842" y="566" style="fill:#c0302a;font-size:11px;font-weight:bold;text-anchor:middle">V</text>
<path d="M855 567a9 9 0 0 1 9-9M858 567a6 6 0 0 1 6-6M861 567a3 3 0 0 1 3-3" fill="none" stroke="#aaa"/>
<path d="M873 559h2l3-3v11l-3-3h-2z" fill="none" stroke="#ddd"/><path d="M880 560l3 3M883 560l-3 3" stroke="#ddd"/>
<rect x="891" y="559" width="11" height="6" fill="none" stroke="#ddd"/><rect x="891" y="559" width="7" height="6" fill="#ddd"/><path d="M894 556v3" stroke="#ddd"/>
<text x="917" y="565" textLength="17" style="fill:#eee;font-size:9px">ENG</text>
<text x="958" y="558" style="fill:#eee;font-size:9.500px;text-anchor:middle" textLength="33">9:41 PM</text>
<text x="958" y="571" style="fill:#eee;font-size:9.500px;text-anchor:middle" textLength="43">15/07/2021</text>
<path d="M993 556h12v10h-4l-2 3l-2-3h-4z" fill="#eee"/><path d="M995 559h8M995 561.500h8M995 564h5" stroke="#333" stroke-width=".8"/>
</svg>
</body></html>
